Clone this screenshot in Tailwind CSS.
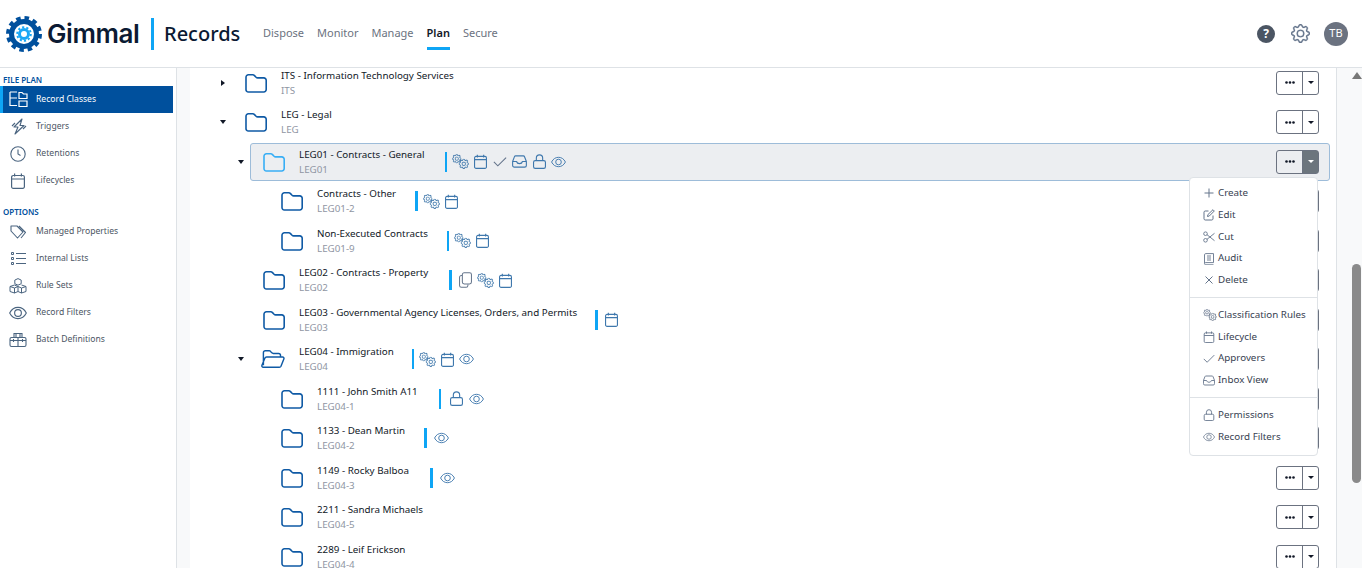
<!DOCTYPE html>
<html lang="en">
<head>
  <meta charset="UTF-8">
  <title>Gimmal Records</title>
  <script src="https://cdn.jsdelivr.net/npm/@tailwindcss/browser@4"></script>
</head>
<body class="bg-white h-[568px] overflow-hidden font-['Noto_Sans',sans-serif] text-[#111827]">
  <!-- shared icons -->
  <svg class="hidden">
    <defs>
      <symbol id="gear" viewBox="0 0 16 16">
        <path fill="currentColor" stroke="currentColor" stroke-width=".25" d="M8 4.754a3.246 3.246 0 1 0 0 6.492 3.246 3.246 0 0 0 0-6.492zM5.754 8a2.246 2.246 0 1 1 4.492 0 2.246 2.246 0 0 1-4.492 0z"/>
        <path fill="currentColor" stroke="currentColor" stroke-width=".25" d="M9.796 1.343c-.527-1.79-3.065-1.79-3.592 0l-.094.319a.873.873 0 0 1-1.255.52l-.292-.16c-1.64-.892-3.433.902-2.54 2.541l.159.292a.873.873 0 0 1-.52 1.255l-.319.094c-1.79.527-1.79 3.065 0 3.592l.319.094a.873.873 0 0 1 .52 1.255l-.16.292c-.892 1.64.901 3.434 2.541 2.54l.292-.159a.873.873 0 0 1 1.255.52l.094.319c.527 1.79 3.065 1.79 3.592 0l.094-.319a.873.873 0 0 1 1.255-.52l.292.16c1.64.893 3.434-.902 2.54-2.541l-.159-.292a.873.873 0 0 1 .52-1.255l.319-.094c1.79-.527 1.79-3.065 0-3.592l-.319-.094a.873.873 0 0 1-.52-1.255l.16-.292c.893-1.64-.902-3.433-2.541-2.54l-.292.159a.873.873 0 0 1-1.255-.52l-.094-.319zm-2.633.283c.246-.835 1.428-.835 1.674 0l.094.319a1.873 1.873 0 0 0 2.693 1.115l.291-.16c.764-.415 1.6.42 1.184 1.185l-.159.292a1.873 1.873 0 0 0 1.116 2.692l.318.094c.835.246.835 1.428 0 1.674l-.319.094a1.873 1.873 0 0 0-1.115 2.693l.16.291c.415.764-.42 1.6-1.185 1.184l-.291-.159a1.873 1.873 0 0 0-2.693 1.116l-.094.318c-.246.835-1.428.835-1.674 0l-.094-.319a1.873 1.873 0 0 0-2.692-1.115l-.292.16c-.764.415-1.6-.42-1.184-1.185l.159-.291A1.873 1.873 0 0 0 1.945 8.93l-.319-.094c-.835-.246-.835-1.428 0-1.674l.319-.094A1.873 1.873 0 0 0 3.06 4.377l-.16-.292c-.415-.764.42-1.6 1.185-1.184l.292.159a1.873 1.873 0 0 0 2.692-1.115l.094-.319z"/>
      </symbol>
      <symbol id="gears" viewBox="0 0 18 16">
        <use href="#gear" x="0" y="0" width="10" height="10"/>
        <use href="#gear" x="7" y="5" width="11" height="11"/>
      </symbol>
      <symbol id="folder" viewBox="0 0 22 20">
        <path fill="none" stroke="currentColor" stroke-width="1.6" stroke-linejoin="round" d="M1 4.2a2.4 2.4 0 0 1 2.4-2.4h4.4c.7 0 1.2.3 1.7.8l1.6 1.7c.4.4.9.6 1.5.6h6.2a2.4 2.4 0 0 1 2.4 2.4v9.3a2.4 2.4 0 0 1-2.4 2.4H3.4A2.4 2.4 0 0 1 1 16.400z"/>
      </symbol>
      <symbol id="folder-open" viewBox="0 0 25 20">
        <path fill="none" stroke="currentColor" stroke-width="1.5" stroke-linejoin="round" d="M2.500 16.500V3.400A2 2 0 0 1 4.500 1.400h4c.6 0 1.100.2 1.500.7l1.300 1.500c.4.4.9.600 1.500.600h5.500a2 2 0 0 1 2 2v1.800M5.800 8h16.700c1 0 1.700 1 1.300 1.900l-3 7.600c-.3.700-1 1.100-1.700 1.100H2.300c-1 0-1.700-1-1.300-2l3-7.400C4.300 8.500 5 8 5.800 8z"/>
      </symbol>
      <symbol id="cal" viewBox="0 0 14 16">
        <path fill="none" stroke="currentColor" stroke-width="1.200" d="M2.200 2.500h9.600a1.600 1.600 0 0 1 1.600 1.600v9.700a1.600 1.600 0 0 1-1.600 1.600H2.200a1.600 1.600 0 0 1-1.600-1.600V4.100a1.600 1.600 0 0 1 1.600-1.600zM.6 6h12.800M3.600 .6v3M10.400 .6v3"/>
      </symbol>
      <symbol id="check" viewBox="0 0 16 12">
        <path fill="none" stroke="currentColor" stroke-width="1.200" d="M1 6.500l4.500 4.500L15 1.500"/>
      </symbol>
      <symbol id="inbox" viewBox="0 0 16 14">
        <path fill="none" stroke="currentColor" stroke-width="1.200" stroke-linejoin="round" d="M3.800 1h8.400c.5 0 1 .3 1.200.8l2 5.200v4.200a1.800 1.800 0 0 1-1.800 1.800H2.400A1.800 1.800 0 0 1 .6 11.200V7l2-5.200C2.800 1.300 3.300 1 3.800 1zM.6 7h4.200c.4 1.500 1.500 2.300 3.200 2.300s2.800-.8 3.200-2.300h4.200"/>
      </symbol>
      <symbol id="lock" viewBox="0 0 14 16">
        <path fill="none" stroke="currentColor" stroke-width="1.200" d="M2.400 7h9.200a1.800 1.800 0 0 1 1.800 1.800v4.800a1.800 1.800 0 0 1-1.800 1.800H2.400a1.800 1.800 0 0 1-1.800-1.800V8.800A1.800 1.800 0 0 1 2.400 7zM3.600 7V4.300a3.400 3.400 0 0 1 6.800 0V7"/>
      </symbol>
      <symbol id="eye" viewBox="0 0 16 12">
        <path fill="none" stroke="currentColor" stroke-width="1" d="M.6 6C2.300 2.700 4.800 1 8 1s5.700 1.700 7.400 5c-1.700 3.300-4.200 5-7.400 5S2.300 9.300 .6 6z"/>
        <circle cx="8" cy="6" r="3" fill="none" stroke="currentColor" stroke-width="1"/>
      </symbol>
      <symbol id="copy" viewBox="0 0 14 17">
        <path fill="none" stroke="currentColor" stroke-width="1.100" d="M5.600 .7h5.800a2 2 0 0 1 2 2v8a2 2 0 0 1-2 2H5.600a2 2 0 0 1-2-2v-8a2 2 0 0 1 2-2zM3.600 3.600H2.600a2 2 0 0 0-2 2v8.700a2 2 0 0 0 2 2h5a2 2 0 0 0 2-2v-.7"/>
      </symbol>
      <symbol id="dots" viewBox="0 0 10 3">
        <circle cx="1.500" cy="1.500" r="1.300" fill="#111827"/><circle cx="5" cy="1.500" r="1.300" fill="#111827"/><circle cx="8.500" cy="1.500" r="1.300" fill="#111827"/>
      </symbol>
    </defs>
  </svg>

  <!-- top bar -->
  <header class="h-[68px] border-b border-[#dee2e6] flex items-center pl-[6px] pr-[14px]">
    <svg class="w-[36px] h-[36px] shrink-0" viewBox="0 0 36 36">
      <circle cx="18" cy="18" r="16" fill="none" stroke="#00509d" stroke-width="4" stroke-dasharray="4.500 3.880"/>
      <circle cx="18" cy="18" r="12.500" fill="none" stroke="#00509d" stroke-width="5"/>
      <circle cx="18" cy="18" r="6.800" fill="none" stroke="#1aa7f5" stroke-width="2" stroke-dasharray="2.200 2.070"/>
      <circle cx="18" cy="18" r="4.500" fill="none" stroke="#1aa7f5" stroke-width="3"/>
    </svg>
    <span class="ml-[5px] w-[98px] font-['Inter',sans-serif] font-semibold text-[26px] tracking-[-0.4px] text-[#0b1a33]">Gimmal</span>
    <span class="ml-[6px] w-[3px] h-[32px] bg-[#0ea5f5]"></span>
    <span class="ml-[10px] w-[99px] font-medium text-[20px] text-[#0b1a33]">Records</span>
    <nav class="flex gap-[13px] text-[11px] text-[#6b7280] h-full items-center">
      <a>Dispose</a>
      <a>Monitor</a>
      <a>Manage</a>
      <a class="relative font-semibold text-[#111827]">Plan<span class="absolute left-0 right-0 top-[22px] h-[3px] bg-[#0ea5f5]"></span></a>
      <a>Secure</a>
    </nav>
    <div class="ml-auto flex items-center">
      <span class="w-[18px] h-[18px] rounded-full bg-[#4b5563] text-white text-[12px] font-bold flex items-center justify-center">?</span>
      <svg class="ml-[16px] w-[19px] h-[19px] text-[#64748b]"><use href="#gear"/></svg>
      <span class="ml-[14px] w-[24px] h-[24px] rounded-full bg-[#6b7280] text-white text-[11px] flex items-center justify-center">TB</span>
    </div>
  </header>

  <div class="flex h-[500px]">
    <!-- sidebar -->
    <aside class="w-[177px] shrink-0 border-r border-[#dee2e6] pr-[3px] pt-[6px] text-[8.600px] text-[#4b5563]">
      <h4 class="pl-[3px] h-[12px] leading-[11px] text-[8px] font-semibold text-[#00509d]">FILE PLAN</h4>
      <ul>
        <li class="h-[27px] flex items-center bg-[#00509d] text-white border-l-[3px] border-[#0ea5f5]">
          <svg class="ml-[6px] w-[19px] h-[17px]" viewBox="0 0 19 17" fill="none" stroke="currentColor" stroke-width="1.200"><path d="M1 1v13.500h7M1 7h7M1 1h7M10 1.500h3l1.500 1.500h3.500v4.500h-8zM10 10h8v5.500h-8z"/></svg>
          <span class="ml-[8px]">Record Classes</span>
        </li>
        <li class="h-[27px] flex items-center">
          <svg class="ml-[11px] w-[16px] h-[17px] text-[#4b6580]" viewBox="0 0 16 17" fill="none" stroke="currentColor" stroke-width="1.100" stroke-linejoin="round"><path d="M11 1L3 9h4l-3 7 9-8.500H9l2-6.500zM1 8l3-3M12 11l3-3"/></svg>
          <span class="ml-[9px]">Triggers</span>
        </li>
        <li class="h-[27px] flex items-center">
          <svg class="ml-[10px] w-[16px] h-[16px] text-[#4b6580]" viewBox="0 0 16 16" fill="none" stroke="currentColor" stroke-width="1.100"><circle cx="8" cy="8" r="7.200"/><path d="M8 3.500V8l2.500 1.500"/></svg>
          <span class="ml-[10px]">Retentions</span>
        </li>
        <li class="h-[27px] flex items-center">
          <svg class="ml-[11px] w-[14px] h-[16px] text-[#4b6580]"><use href="#cal"/></svg>
          <span class="ml-[11px]">Lifecycles</span>
        </li>
      </ul>
      <h4 class="pl-[3px] mt-[11px] h-[13px] leading-[13px] text-[8px] font-semibold text-[#00509d]">OPTIONS</h4>
      <ul>
        <li class="h-[27px] flex items-center">
          <svg class="ml-[10px] w-[17px] h-[14px] text-[#4b6580]" viewBox="0 0 17 14" fill="none" stroke="currentColor" stroke-width="1.100" stroke-linejoin="round"><path d="M1 1h6l6 6-5.500 6L1 6zM9 1l6.500 6.500L11 13"/></svg>
          <span class="ml-[9px]">Managed Properties</span>
        </li>
        <li class="h-[27px] flex items-center">
          <svg class="ml-[11px] w-[15px] h-[13px] text-[#4b6580]" viewBox="0 0 15 13" fill="none" stroke="currentColor" stroke-width="1"><path d="M.5 .5h2v2h-2zM.5 5.500h2v2h-2zM.5 10.500h2v2h-2zM5 1.500h10M5 6.500h10M5 11.500h10"/></svg>
          <span class="ml-[10px]">Internal Lists</span>
        </li>
        <li class="h-[27px] flex items-center">
          <svg class="ml-[9px] w-[18px] h-[16px] text-[#4b6580]" viewBox="0 0 18 16" fill="none" stroke="currentColor" stroke-width="1"><path d="M9 .6l3.200 1.500v3.600L9 7.200 5.800 5.700V2.100zM5.500 7l3.500 1.500v5L5.500 15 1 13.500v-5zM12.500 7L17 8.500v5L12.500 15 9 13.500M1 8.500l4.500 1.500L9 8.500M9 8.500l3.500 1.500L17 8.500M5.500 10v5M12.500 10v5"/></svg>
          <span class="ml-[9px]">Rule Sets</span>
        </li>
        <li class="h-[27px] flex items-center">
          <svg class="ml-[9px] w-[18px] h-[14px] text-[#4b6580]"><use href="#eye"/></svg>
          <span class="ml-[9px]">Record Filters</span>
        </li>
        <li class="h-[27px] flex items-center">
          <svg class="ml-[9px] w-[18px] h-[16px] text-[#4b6580]" viewBox="0 0 18 16" fill="none" stroke="currentColor" stroke-width="1.100"><path d="M5 5V1.500h8V5M7 1.500V5M11 1.500V5M2.500 5.500h13a1.500 1.500 0 0 1 1.500 1.500v6a1.500 1.500 0 0 1-1.500 1.500h-13A1.500 1.500 0 0 1 1 13V7a1.500 1.500 0 0 1 1.500-1.500zM9 5.500v9M1 8.500h16M4.500 7v3M13.500 7v3"/></svg>
          <span class="ml-[9px]">Batch Definitions</span>
        </li>
      </ul>
    </aside>

    <div class="w-[13px] shrink-0 bg-[#f8f9fa]"></div>

    <!-- file plan tree -->
    <main class="relative w-[1146px] shrink-0 overflow-hidden text-[9.800px]">
      <div class="-mt-[5px]">

        <div class="h-[39.500px] flex items-center">
          <div class="w-[42px] flex justify-end pr-[7px]"><span class="w-0 h-0 border-y-[3px] border-y-transparent border-l-[4px] border-l-[#111827]"></span></div>
          <div class="flex-1 mr-[6px] h-[38px] flex items-center pl-[12px] pr-[10px] border border-transparent">
            <svg class="w-[22px] h-[20px] text-[#0f5aa5]"><use href="#folder"/></svg>
            <div class="ml-[14px] leading-[15px]"><div>ITS - Information Technology Services</div><div class="text-[#8f96a3]">ITS</div></div>
            <div class="ml-auto flex h-[24px] w-[43px] border border-[#6b7280] rounded-[3px]"><span class="w-[26px] border-r border-[#6b7280] flex items-center justify-center"><svg class="w-[10px] h-[3px]"><use href="#dots"/></svg></span><span class="flex-1 flex items-center justify-center"><span class="w-0 h-0 border-x-[3px] border-x-transparent border-t-[3px] border-t-[#111827]"></span></span></div>
          </div>
        </div>

        <div class="h-[39.500px] flex items-center">
          <div class="w-[42px] flex justify-end pr-[6px]"><span class="w-0 h-0 border-x-[3px] border-x-transparent border-t-[4px] border-t-[#111827]"></span></div>
          <div class="flex-1 mr-[6px] h-[38px] flex items-center pl-[12px] pr-[10px] border border-transparent">
            <svg class="w-[22px] h-[20px] text-[#0f5aa5]"><use href="#folder"/></svg>
            <div class="ml-[14px] leading-[15px]"><div>LEG - Legal</div><div class="text-[#8f96a3]">LEG</div></div>
            <div class="ml-auto flex h-[24px] w-[43px] border border-[#6b7280] rounded-[3px]"><span class="w-[26px] border-r border-[#6b7280] flex items-center justify-center"><svg class="w-[10px] h-[3px]"><use href="#dots"/></svg></span><span class="flex-1 flex items-center justify-center"><span class="w-0 h-0 border-x-[3px] border-x-transparent border-t-[3px] border-t-[#111827]"></span></span></div>
          </div>
        </div>

        <div class="h-[39.500px] flex items-center">
          <div class="w-[60px] flex justify-end pr-[6px]"><span class="w-0 h-0 border-x-[3px] border-x-transparent border-t-[4px] border-t-[#111827]"></span></div>
          <div class="flex-1 mr-[6px] h-[38px] flex items-center pl-[12px] pr-[10px] border border-[#9dbcd9] bg-[#eceef1] rounded-[3px]">
            <svg class="w-[22px] h-[20px] text-[#38aef5]"><use href="#folder"/></svg>
            <div class="ml-[14px] leading-[15px]"><div>LEG01 - Contracts - General</div><div class="text-[#8f96a3]">LEG01</div></div>
            <span class="ml-[20px] w-[2.500px] h-[20px] bg-[#0ea5f5]"></span>
            <div class="ml-[5px] flex items-center gap-[5px] text-[#3f78ad]">
              <svg class="w-[17px] h-[15px]"><use href="#gears"/></svg>
              <svg class="w-[13px] h-[15px]"><use href="#cal"/></svg>
              <svg class="ml-[1px] w-[14px] h-[11px] text-[#64748b]"><use href="#check"/></svg>
              <svg class="w-[15px] h-[13px]"><use href="#inbox"/></svg>
              <svg class="ml-[1px] w-[13px] h-[15px]"><use href="#lock"/></svg>
              <svg class="w-[15px] h-[12px]"><use href="#eye"/></svg>
            </div>
            <div class="ml-auto flex h-[24px] w-[43px] border border-[#6b7280] rounded-[3px]"><span class="w-[26px] border-r border-[#6b7280] flex items-center justify-center"><svg class="w-[10px] h-[3px]"><use href="#dots"/></svg></span><span class="flex-1 flex items-center justify-center bg-[#6c757d]"><span class="w-0 h-0 border-x-[3px] border-x-transparent border-t-[3px] border-t-white"></span></span></div>
          </div>
        </div>

        <div class="h-[39.500px] flex items-center">
          <div class="w-[78px]"></div>
          <div class="flex-1 mr-[6px] h-[38px] flex items-center pl-[12px] pr-[10px] border border-transparent">
            <svg class="w-[22px] h-[20px] text-[#0f5aa5]"><use href="#folder"/></svg>
            <div class="ml-[14px] leading-[15px]"><div>Contracts - Other</div><div class="text-[#8f96a3]">LEG01-2</div></div>
            <span class="ml-[19px] w-[2.500px] h-[20px] bg-[#0ea5f5]"></span>
            <div class="ml-[5px] flex items-center gap-[5px] text-[#3f78ad]">
              <svg class="w-[17px] h-[15px]"><use href="#gears"/></svg>
              <svg class="w-[13px] h-[15px]"><use href="#cal"/></svg>
            </div>
            <div class="ml-auto flex h-[24px] w-[43px] border border-[#6b7280] rounded-[3px]"></div>
          </div>
        </div>

        <div class="h-[39.500px] flex items-center">
          <div class="w-[78px]"></div>
          <div class="flex-1 mr-[6px] h-[38px] flex items-center pl-[12px] pr-[10px] border border-transparent">
            <svg class="w-[22px] h-[20px] text-[#0f5aa5]"><use href="#folder"/></svg>
            <div class="ml-[14px] leading-[15px]"><div>Non-Executed Contracts</div><div class="text-[#8f96a3]">LEG01-9</div></div>
            <span class="ml-[19px] w-[2.500px] h-[20px] bg-[#0ea5f5]"></span>
            <div class="ml-[5px] flex items-center gap-[5px] text-[#3f78ad]">
              <svg class="w-[17px] h-[15px]"><use href="#gears"/></svg>
              <svg class="w-[13px] h-[15px]"><use href="#cal"/></svg>
            </div>
            <div class="ml-auto flex h-[24px] w-[43px] border border-[#6b7280] rounded-[3px]"></div>
          </div>
        </div>

        <div class="h-[39.500px] flex items-center">
          <div class="w-[60px]"></div>
          <div class="flex-1 mr-[6px] h-[38px] flex items-center pl-[12px] pr-[10px] border border-transparent">
            <svg class="w-[22px] h-[20px] text-[#0f5aa5]"><use href="#folder"/></svg>
            <div class="ml-[14px] leading-[15px]"><div>LEG02 - Contracts - Property</div><div class="text-[#8f96a3]">LEG02</div></div>
            <span class="ml-[21px] w-[2.500px] h-[20px] bg-[#0ea5f5]"></span>
            <div class="ml-[7px] flex items-center gap-[5px] text-[#3f78ad]">
              <svg class="w-[13px] h-[16px] text-[#64748b]"><use href="#copy"/></svg>
              <svg class="w-[17px] h-[15px]"><use href="#gears"/></svg>
              <svg class="w-[13px] h-[15px]"><use href="#cal"/></svg>
            </div>
            <div class="ml-auto flex h-[24px] w-[43px] border border-[#6b7280] rounded-[3px]"></div>
          </div>
        </div>

        <div class="h-[39.500px] flex items-center">
          <div class="w-[60px]"></div>
          <div class="flex-1 mr-[6px] h-[38px] flex items-center pl-[12px] pr-[10px] border border-transparent">
            <svg class="w-[22px] h-[20px] text-[#0f5aa5]"><use href="#folder"/></svg>
            <div class="ml-[14px] leading-[15px]"><div>LEG03 - Governmental Agency Licenses, Orders, and Permits</div><div class="text-[#8f96a3]">LEG03</div></div>
            <span class="ml-[18px] w-[2.500px] h-[20px] bg-[#0ea5f5]"></span>
            <div class="ml-[7px] flex items-center gap-[5px] text-[#3f78ad]">
              <svg class="w-[13px] h-[15px]"><use href="#cal"/></svg>
            </div>
            <div class="ml-auto flex h-[24px] w-[43px] border border-[#6b7280] rounded-[3px]"></div>
          </div>
        </div>

        <div class="h-[39.500px] flex items-center">
          <div class="w-[60px] flex justify-end pr-[6px]"><span class="w-0 h-0 border-x-[3px] border-x-transparent border-t-[4px] border-t-[#111827]"></span></div>
          <div class="flex-1 mr-[6px] h-[38px] flex items-center pl-[10px] pr-[10px] border border-transparent">
            <svg class="w-[24px] h-[20px] text-[#0f5aa5]"><use href="#folder-open"/></svg>
            <div class="ml-[14px] leading-[15px]"><div>LEG04 - Immigration</div><div class="text-[#8f96a3]">LEG04</div></div>
            <span class="ml-[18px] w-[2.500px] h-[20px] bg-[#0ea5f5]"></span>
            <div class="ml-[5px] flex items-center gap-[5px] text-[#3f78ad]">
              <svg class="w-[17px] h-[15px]"><use href="#gears"/></svg>
              <svg class="w-[13px] h-[15px]"><use href="#cal"/></svg>
              <svg class="w-[15px] h-[12px]"><use href="#eye"/></svg>
            </div>
            <div class="ml-auto flex h-[24px] w-[43px] border border-[#6b7280] rounded-[3px]"></div>
          </div>
        </div>

        <div class="h-[39.500px] flex items-center">
          <div class="w-[78px]"></div>
          <div class="flex-1 mr-[6px] h-[38px] flex items-center pl-[12px] pr-[10px] border border-transparent">
            <svg class="w-[22px] h-[20px] text-[#0f5aa5]"><use href="#folder"/></svg>
            <div class="ml-[14px] leading-[15px]"><div>1111 - John Smith A11</div><div class="text-[#8f96a3]">LEG04-1</div></div>
            <span class="ml-[21px] w-[2.500px] h-[20px] bg-[#0ea5f5]"></span>
            <div class="ml-[9px] flex items-center gap-[6px] text-[#3f78ad]">
              <svg class="w-[13px] h-[15px]"><use href="#lock"/></svg>
              <svg class="w-[15px] h-[12px]"><use href="#eye"/></svg>
            </div>
            <div class="ml-auto flex h-[24px] w-[43px] border border-[#6b7280] rounded-[3px]"></div>
          </div>
        </div>

        <div class="h-[39.500px] flex items-center">
          <div class="w-[78px]"></div>
          <div class="flex-1 mr-[6px] h-[38px] flex items-center pl-[12px] pr-[10px] border border-transparent">
            <svg class="w-[22px] h-[20px] text-[#0f5aa5]"><use href="#folder"/></svg>
            <div class="ml-[14px] leading-[15px]"><div>1133 - Dean Martin</div><div class="text-[#8f96a3]">LEG04-2</div></div>
            <span class="ml-[19px] w-[2.500px] h-[20px] bg-[#0ea5f5]"></span>
            <svg class="ml-[7px] w-[15px] h-[12px] text-[#3f78ad]"><use href="#eye"/></svg>
            <div class="ml-auto flex h-[24px] w-[43px] border border-[#6b7280] rounded-[3px]"></div>
          </div>
        </div>

        <div class="h-[39.500px] flex items-center">
          <div class="w-[78px]"></div>
          <div class="flex-1 mr-[6px] h-[38px] flex items-center pl-[12px] pr-[10px] border border-transparent">
            <svg class="w-[22px] h-[20px] text-[#0f5aa5]"><use href="#folder"/></svg>
            <div class="ml-[14px] leading-[15px]"><div>1149 - Rocky Balboa</div><div class="text-[#8f96a3]">LEG04-3</div></div>
            <span class="ml-[21px] w-[2.500px] h-[20px] bg-[#0ea5f5]"></span>
            <svg class="ml-[7px] w-[15px] h-[12px] text-[#3f78ad]"><use href="#eye"/></svg>
            <div class="ml-auto flex h-[24px] w-[43px] border border-[#6b7280] rounded-[3px]"><span class="w-[26px] border-r border-[#6b7280] flex items-center justify-center"><svg class="w-[10px] h-[3px]"><use href="#dots"/></svg></span><span class="flex-1 flex items-center justify-center"><span class="w-0 h-0 border-x-[3px] border-x-transparent border-t-[3px] border-t-[#111827]"></span></span></div>
          </div>
        </div>

        <div class="h-[39.500px] flex items-center">
          <div class="w-[78px]"></div>
          <div class="flex-1 mr-[6px] h-[38px] flex items-center pl-[12px] pr-[10px] border border-transparent">
            <svg class="w-[22px] h-[20px] text-[#0f5aa5]"><use href="#folder"/></svg>
            <div class="ml-[14px] leading-[15px]"><div>2211 - Sandra Michaels</div><div class="text-[#8f96a3]">LEG04-5</div></div>
            <div class="ml-auto flex h-[24px] w-[43px] border border-[#6b7280] rounded-[3px]"><span class="w-[26px] border-r border-[#6b7280] flex items-center justify-center"><svg class="w-[10px] h-[3px]"><use href="#dots"/></svg></span><span class="flex-1 flex items-center justify-center"><span class="w-0 h-0 border-x-[3px] border-x-transparent border-t-[3px] border-t-[#111827]"></span></span></div>
          </div>
        </div>

        <div class="h-[39.500px] flex items-center">
          <div class="w-[78px]"></div>
          <div class="flex-1 mr-[6px] h-[38px] flex items-center pl-[12px] pr-[10px] border border-transparent">
            <svg class="w-[22px] h-[20px] text-[#0f5aa5]"><use href="#folder"/></svg>
            <div class="ml-[14px] leading-[15px]"><div>2289 - Leif Erickson</div><div class="text-[#8f96a3]">LEG04-4</div></div>
            <div class="ml-auto flex h-[24px] w-[43px] border border-[#6b7280] rounded-[3px]"><span class="w-[26px] border-r border-[#6b7280] flex items-center justify-center"><svg class="w-[10px] h-[3px]"><use href="#dots"/></svg></span><span class="flex-1 flex items-center justify-center"><span class="w-0 h-0 border-x-[3px] border-x-transparent border-t-[3px] border-t-[#111827]"></span></span></div>
          </div>
        </div>
      </div>

      <!-- row action menu -->
      <div class="absolute left-[999px] top-[109px] w-[129px] h-[279px] bg-white border border-[#dee2e6] rounded-[4px] pt-[4.500px] text-[9.800px] text-[#374151]">
        <div class="h-[21.750px] flex items-center pl-[13px]"><svg class="w-[12px] h-[12px] text-[#64748b]" viewBox="0 0 12 12" fill="none" stroke="currentColor"><path d="M6 1.500v9M1.500 6h9"/></svg><span class="ml-[3px]">Create</span></div>
        <div class="h-[21.750px] flex items-center pl-[13px]"><svg class="w-[12px] h-[12px] text-[#64748b]" viewBox="0 0 12 12" fill="none" stroke="currentColor"><path d="M10 6.500v3.300c0 .7-.5 1.200-1.200 1.200H2.200C1.500 11 1 10.500 1 9.800V3.200C1 2.500 1.500 2 2.200 2h3.300M4.500 7.500l.4-1.900L10 .7l1.300 1.300-5 5z"/></svg><span class="ml-[3px]">Edit</span></div>
        <div class="h-[21.750px] flex items-center pl-[13px]"><svg class="w-[12px] h-[12px] text-[#64748b]" viewBox="0 0 12 12" fill="none" stroke="currentColor" stroke-width=".9"><circle cx="2.500" cy="2.700" r="1.800"/><circle cx="2.500" cy="9.300" r="1.800"/><path d="M4 3.700l7.500 6M4 8.300l7.500-6"/></svg><span class="ml-[3px]">Cut</span></div>
        <div class="h-[21.750px] flex items-center pl-[13px]"><svg class="w-[12px] h-[12px] text-[#64748b]" viewBox="0 0 12 12" fill="none" stroke="currentColor" stroke-width=".9"><path d="M1.500 10V1.800C1.500 1.100 2 .6 2.700 .6h7.800v9H2.700c-.7 0-1.200.5-1.200 1.100s.5 1.100 1.200 1.100h7.800M4 3h4M4 5h4M4 7h4"/></svg><span class="ml-[3px]">Audit</span></div>
        <div class="h-[21.750px] flex items-center pl-[13px]"><svg class="w-[12px] h-[12px] text-[#64748b]" viewBox="0 0 12 12" fill="none" stroke="currentColor"><path d="M2.500 2.500l7 7M9.500 2.500l-7 7"/></svg><span class="ml-[3px]">Delete</span></div>
        <div class="mt-[6px] mb-[6px] border-t border-[#dee2e6]"></div>
        <div class="h-[21.750px] flex items-center pl-[13px]"><svg class="w-[14px] h-[12px] text-[#64748b]"><use href="#gears"/></svg><span class="ml-[1px]">Classification Rules</span></div>
        <div class="h-[21.750px] flex items-center pl-[13px]"><svg class="w-[12px] h-[12px] text-[#64748b]"><use href="#cal"/></svg><span class="ml-[3px]">Lifecycle</span></div>
        <div class="h-[21.750px] flex items-center pl-[13px]"><svg class="w-[12px] h-[9px] text-[#64748b]"><use href="#check"/></svg><span class="ml-[3px]">Approvers</span></div>
        <div class="h-[21.750px] flex items-center pl-[13px]"><svg class="w-[12px] h-[11px] text-[#64748b]"><use href="#inbox"/></svg><span class="ml-[3px]">Inbox View</span></div>
        <div class="mt-[6px] mb-[6px] border-t border-[#dee2e6]"></div>
        <div class="h-[21.750px] flex items-center pl-[13px]"><svg class="w-[12px] h-[12px] text-[#64748b]"><use href="#lock"/></svg><span class="ml-[3px]">Permissions</span></div>
        <div class="h-[21.750px] flex items-center pl-[13px]"><svg class="w-[12px] h-[10px] text-[#64748b]"><use href="#eye"/></svg><span class="ml-[3px]">Record Filters</span></div>
      </div>
    </main>

    <!-- scrollbar gutter -->
    <div class="relative flex-1 bg-[#f8f9fa] border-l border-[#dee2e6]">
      <span class="absolute left-[15px] top-[4px] w-0 h-0 border-x-[5px] border-x-transparent border-b-[7px] border-b-[#777]"></span>
      <span class="absolute left-[15px] top-[196px] w-[9px] h-[219px] rounded-[5px] bg-[#8a8a8a]"></span>
    </div>
  </div>
</body>
</html>
